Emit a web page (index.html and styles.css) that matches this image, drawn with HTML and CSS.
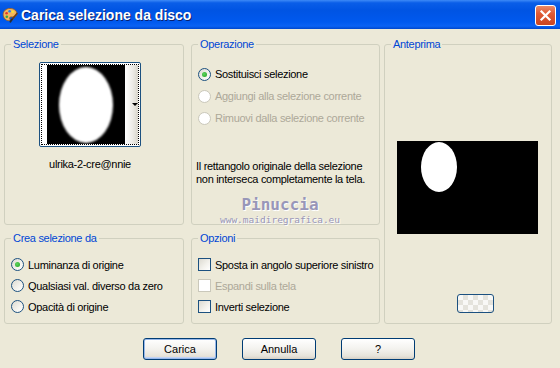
FILE: index.html
```html
<!DOCTYPE html>
<html lang="it">
<head>
    <meta charset="UTF-8">
    <title>Carica selezione da disco</title>
    <link rel="stylesheet" href="styles.css">
</head>
<body>
    <div class="window">
        <div class="titlebar">
            <svg class="app-icon" width="16" height="16" viewBox="0 0 16 16">
                <path d="M8 1.5c-4 0-6.8 2.6-6.8 6 0 3.3 2.6 6.2 5.6 6.2 1.4 0 1.6-1 1-1.9-.6-.9 0-1.9 1.2-1.9h1.8c2.4 0 4-1.4 4-3.4C14.8 3.6 11.8 1.5 8 1.5z" fill="#f2b55e" stroke="#9a5a1c" stroke-width="0.8"/>
                <circle cx="4.6" cy="6.2" r="1.3" fill="#e23a2a"/>
                <circle cx="7.6" cy="4.2" r="1.3" fill="#2f7de1"/>
                <circle cx="4.8" cy="9.8" r="1.3" fill="#3aa83a"/>
                <circle cx="10.8" cy="4.8" r="1.2" fill="#f6e23a"/>
                <path d="M15 6.5 9.5 13" stroke="#6b3a12" stroke-width="1.6" stroke-linecap="round"/>
                <path d="M9.8 12.6 8.4 14.8" stroke="#2c2c2c" stroke-width="1.8" stroke-linecap="round"/>
            </svg>
            <span class="title">Carica selezione da disco</span>
            <span class="close-btn">
                <svg width="13" height="13" viewBox="0 0 13 13">
                    <path d="M2.5 2.5 10.5 10.5M10.5 2.5 2.5 10.5" stroke="#fff" stroke-width="2.2" stroke-linecap="square"/>
                </svg>
            </span>
        </div>

        <div class="panels">
            <fieldset class="group sel-group">
                <legend>Selezione</legend>
                <div class="sel-body">
                    <div class="thumb-col">
                        <div class="thumb">
                            <div class="thumb-img">
                                <svg width="78" height="79" viewBox="0 0 78 79">
                                    <defs>
                                        <filter id="soft"><feGaussianBlur stdDeviation="1"/></filter>
                                    </defs>
                                    <rect width="78" height="79" fill="#000"/>
                                    <ellipse cx="39" cy="40" rx="27" ry="38" fill="#fff" filter="url(#soft)"/>
                                </svg>
                            </div>
                            <div class="thumb-drop"><span class="drop-arrow"></span></div>
                        </div>
                        <div class="thumb-name">ulrika-2-cre@nnie</div>
                    </div>
                </div>
            </fieldset>

            <fieldset class="group op-group">
                <legend>Operazione</legend>
                <div class="op-body">
                    <div class="option"><span class="radio checked"></span>Sostituisci selezione</div>
                    <div class="option disabled"><span class="radio"></span>Aggiungi alla selezione corrente</div>
                    <div class="option disabled"><span class="radio"></span>Rimuovi dalla selezione corrente</div>
                    <p class="note">Il rettangolo originale della selezione<br>non interseca completamente la tela.</p>
                </div>
                <div class="watermark">
                    <div class="wm-name">Pinuccia</div>
                    <div class="wm-site">www.maidiregrafica.eu</div>
                </div>
            </fieldset>

            <fieldset class="group preview-group">
                <legend>Anteprima</legend>
                <div class="preview-body">
                    <svg class="preview" width="141" height="93" viewBox="0 0 141 93">
                        <rect width="141" height="93" fill="#000"/>
                        <ellipse cx="42" cy="26" rx="18" ry="25" fill="#fff"/>
                    </svg>
                    <span class="bg-btn"></span>
                </div>
            </fieldset>

            <fieldset class="group crea-group">
                <legend>Crea selezione da</legend>
                <div class="list-body">
                    <div class="option"><span class="radio checked"></span>Luminanza di origine</div>
                    <div class="option"><span class="radio"></span>Qualsiasi val. diverso da zero</div>
                    <div class="option"><span class="radio"></span>Opacità di origine</div>
                </div>
            </fieldset>

            <fieldset class="group opts-group">
                <legend>Opzioni</legend>
                <div class="list-body">
                    <div class="option"><span class="check"></span>Sposta in angolo superiore sinistro</div>
                    <div class="option disabled"><span class="check"></span>Espandi sulla tela</div>
                    <div class="option"><span class="check"></span>Inverti selezione</div>
                </div>
            </fieldset>
        </div>

        <div class="actions">
            <button class="default">Carica</button>
            <button>Annulla</button>
            <button>?</button>
        </div>
    </div>
</body>
</html>
```

FILE: styles.css
```css
html, body {
    margin: 0;
    background-color: #ece9d8;
}
body {
    font-family: "Liberation Sans", Arial, sans-serif;
    font-size: 11px;
    letter-spacing: -0.3px;
    color: #000;
}
.window {
    width: 560px;
    height: 368px;
    overflow: hidden;
}

/* title bar */
.titlebar {
    height: 29px;
    display: flex;
    align-items: center;
    background: linear-gradient(to bottom, #3d8af7 0%, #0a5ee8 10%, #0054e3 35%, #0059ee 75%, #0a62f4 90%, #0047cc 100%);
}
.app-icon {
    margin-left: 2px;
    margin-top: 1px;
}
.title {
    margin-left: 3px;
    color: #fff;
    font-weight: bold;
    font-size: 14px;
    letter-spacing: 0;
    text-shadow: 1px 1px 0 #0a1f6e;
    flex: 1;
}
.close-btn {
    width: 19px;
    height: 19px;
    margin-right: 4px;
    margin-top: 2px;
    border: 1px solid #fff;
    border-radius: 3px;
    background: linear-gradient(to bottom, #e98a68 0%, #df5a35 40%, #cb4520 100%);
    display: flex;
    align-items: center;
    justify-content: center;
}

/* group boxes */
.panels {
    display: grid;
    grid-template-columns: 180px 188px 168px;
    grid-template-rows: 187px 92px;
    column-gap: 6px;
    row-gap: 7px;
    grid-template-areas:
        "sel op prev"
        "crea opts prev";
    margin: 9px 0 0 4px;
}
.group {
    margin: 0;
    padding: 0;
    border: 1px solid #d0d0bf;
    border-radius: 3px;
    min-width: 0;
    position: relative;
}
.group legend {
    margin-left: 6px;
    padding: 0 2px;
    color: #0046d5;
    line-height: 13px;
}
.sel-group { grid-area: sel; }
.op-group { grid-area: op; margin-left: 1px; width: 187px; }
.preview-group { grid-area: prev; }
.crea-group { grid-area: crea; }
.opts-group { grid-area: opts; margin-left: 1px; width: 187px; }

/* selezione */
.sel-body {
    padding: 11px 0 0 34px;
}
.thumb-col {
    width: 102px;
    text-align: center;
}
.thumb {
    width: 100px;
    height: 83px;
    border: 1px solid #1c5180;
    border-radius: 2px;
    background: #fff;
    display: flex;
    position: relative;
}
.thumb::after {
    content: "";
    position: absolute;
    inset: 1px;
    border: 1px dotted #000;
}
.thumb-img {
    margin: 2px 0 0 7px;
    height: 79px;
}
.thumb-drop {
    width: 13px;
    margin: 2px 0 2px 0;
    background: linear-gradient(to right, #fff, #ecebe6 60%, #d8d5cb);
    position: relative;
}
.drop-arrow {
    position: absolute;
    left: 7px;
    top: 38px;
    border-left: 3px solid transparent;
    border-right: 3px solid transparent;
    border-top: 3px solid #000;
}
.thumb-name {
    margin-top: 11px;
    line-height: 13px;
}

/* radio and checkbox rows */
.op-body {
    padding: 12px 0 0 6px;
}
.list-body {
    padding: 9px 0 0 6px;
}
.option {
    display: flex;
    align-items: center;
    height: 22px;
    white-space: nowrap;
}
.list-body .option {
    height: 21px;
}
.option.disabled {
    color: #aca899;
}
.radio {
    flex-shrink: 0;
    width: 11px;
    height: 11px;
    border: 1px solid #1c5180;
    border-radius: 50%;
    background: linear-gradient(135deg, #dcdad1 0%, #f4f3ee 60%, #fff 100%);
    margin-right: 4px;
    display: flex;
    align-items: center;
    justify-content: center;
}
.radio.checked::after {
    content: "";
    width: 5px;
    height: 5px;
    border-radius: 50%;
    background: radial-gradient(circle at 40% 40%, #5ed45e, #21a121);
}
.disabled .radio {
    border-color: #cac8bb;
    background: #fff;
}
.check {
    flex-shrink: 0;
    width: 11px;
    height: 11px;
    border: 1px solid #1c5180;
    background: linear-gradient(135deg, #dcdad1 0%, #f4f3ee 60%, #fff 100%);
    margin-right: 4px;
}
.disabled .check {
    border-color: #cac8bb;
    background: #fff;
}
.note {
    margin: 31px 0 0 -2px;
    line-height: 13px;
}

/* watermark */
.watermark {
    position: absolute;
    left: 18px;
    top: 145px;
    width: 140px;
    text-align: center;
    font-family: "DejaVu Sans Mono", monospace;
    letter-spacing: 0;
    color: #9896b8;
    text-shadow: 1px 1px 0 #fff;
}
.wm-name {
    font-size: 16px;
    font-weight: bold;
    line-height: 18px;
}
.wm-site {
    font-size: 9.5px;
    line-height: 12px;
}

/* anteprima */
.preview-body {
    display: flex;
    flex-direction: column;
    align-items: flex-start;
    padding-top: 90px;
}
.preview {
    margin-left: 12px;
}
.bg-btn {
    margin: 60px 0 0 72px;
    width: 35px;
    height: 17px;
    border: 1px solid #1c5180;
    border-radius: 3px;
    background:
        repeating-conic-gradient(#e4e3dc 0 25%, #f8f8f6 0 50%) 0 0 / 10px 10px;
}

/* buttons */
.actions {
    display: flex;
    gap: 25px;
    margin: 14px 0 0 143px;
}
.actions button {
    width: 74px;
    height: 22px;
    padding: 0;
    font-family: inherit;
    font-size: 11px;
    letter-spacing: 0;
    color: #000;
    border: 1px solid #003c74;
    border-radius: 3px;
    background: linear-gradient(to bottom, #fff 0%, #f3f2ee 50%, #e6e3da 85%, #d6d0c5 100%);
}
.actions button.default {
    box-shadow: inset 0 0 0 1px #98b8ea, inset 0 -1px 0 1px #c0d3f5;
}
```
